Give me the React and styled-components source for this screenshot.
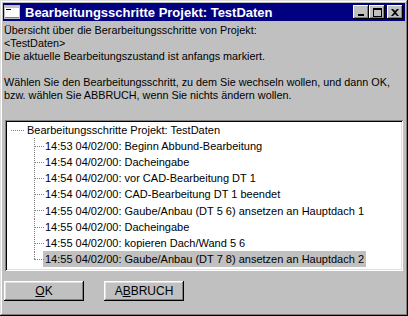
import React from "react";
import styled, { createGlobalStyle } from "styled-components";

const GlobalStyle = createGlobalStyle`
  html, body {
    margin: 0;
    padding: 0;
    background: #c0c0c0;
  }
  body {
    font-family: "Liberation Sans", Arial, sans-serif;
  }
`;

const Window = styled.div`
  width: 408px;
  height: 316px;
  box-sizing: border-box;
  background: #c0c0c0;
  padding: 3px;
  display: flex;
  flex-direction: column;
  box-shadow: inset -1px -1px #000, inset 1px 1px #dfdfdf,
    inset -2px -2px #808080, inset 2px 2px #fff;
`;

const TitleBar = styled.div`
  height: 18px;
  background: #000080;
  display: flex;
  align-items: center;
  padding: 0 2px 0 1px;
  flex-shrink: 0;
`;

const Title = styled.span`
  flex: 1;
  color: #fff;
  font-weight: bold;
  font-size: 13px;
  margin-left: 5px;
  white-space: nowrap;
`;

const Controls = styled.div`
  display: flex;
  align-items: center;
`;

const CtrlButton = styled.div`
  width: 16px;
  height: 14px;
  box-sizing: border-box;
  background: #c0c0c0;
  margin-left: ${(p) => (p.$gap ? "2px" : "0")};
  display: flex;
  align-items: center;
  justify-content: center;
  box-shadow: inset -1px -1px #000, inset 1px 1px #fff,
    inset -2px -2px #808080;
`;

const Content = styled.div`
  flex: 1;
  display: flex;
  flex-direction: column;
  padding: 3px 1px 0 1px;
`;

const Text = styled.p`
  margin: 0 0 ${(p) => (p.$gapAfter ? "13px" : "0")};
  font-size: 10.8px;
  line-height: 13px;
  color: #000;
  white-space: nowrap;
`;

const TreeBox = styled.div`
  margin: 18px 0 0 1px;
  width: 398px;
  height: 151px;
  box-sizing: border-box;
  background: #fff;
  padding: 2px 0 0 0;
  box-shadow: inset 1px 1px #808080, inset -1px -1px #fff,
    inset 2px 2px #000, inset -2px -2px #dfdfdf;
`;

const Row = styled.div`
  position: relative;
  height: 16.1px;
  display: flex;
  align-items: center;
  padding-left: ${(p) => (p.$child ? "38px" : "20px")};
  font-size: 11px;
  color: #000;
  white-space: nowrap;

  &::before {
    content: "";
    position: absolute;
    left: ${(p) => (p.$child ? "29px" : "6px")};
    top: 8px;
    width: ${(p) => (p.$child ? "10px" : "13px")};
    border-top: 1px dotted #808080;
  }

  &::after {
    content: "";
    display: ${(p) => (p.$child ? "block" : "none")};
    position: absolute;
    left: 29px;
    top: 0;
    height: ${(p) => (p.$last ? "8px" : "17px")};
    border-left: 1px dotted #808080;
  }
`;

const Label = styled.span`
  padding: 0 2px;
  line-height: 16px;
  background: ${(p) => (p.$selected ? "#c0c0c0" : "transparent")};
`;

const ButtonRow = styled.div`
  display: flex;
  gap: 20px;
  margin-top: 10px;
`;

const Button = styled.button`
  width: 80px;
  height: 20px;
  box-sizing: border-box;
  padding: 0;
  border: none;
  background: #c0c0c0;
  font-family: "Liberation Sans", Arial, sans-serif;
  font-size: 12px;
  color: #000;
  box-shadow: inset -1px -1px #000, inset 1px 1px #fff,
    inset -2px -2px #808080, inset 2px 2px #dfdfdf;

  u {
    text-decoration: underline;
    text-underline-offset: 1px;
  }
`;

const steps = [
  "14:53 04/02/00: Beginn Abbund-Bearbeitung",
  "14:54 04/02/00: Dacheingabe",
  "14:54 04/02/00: vor CAD-Bearbeitung DT 1",
  "14:54 04/02/00: CAD-Bearbeitung DT 1 beendet",
  "14:55 04/02/00: Gaube/Anbau (DT 5 6) ansetzen an Hauptdach 1",
  "14:55 04/02/00: Dacheingabe",
  "14:55 04/02/00: kopieren Dach/Wand 5 6",
  "14:55 04/02/00: Gaube/Anbau (DT 7 8) ansetzen an Hauptdach 2",
];

const AppIcon = () => (
  <svg width="16" height="14" viewBox="0 0 16 14">
    <rect x="0.5" y="0.5" width="15" height="13" fill="#fff" stroke="#c0c0c0" />
    <rect x="1" y="1" width="14" height="2" fill="#c0c0c0" />
    <rect x="2" y="4" width="5" height="1" fill="#000" />
    <rect x="1" y="12" width="14" height="1" fill="#808080" />
  </svg>
);

export default function App() {
  return (
    <>
      <GlobalStyle />
      <Window>
        <TitleBar>
          <AppIcon />
          <Title>Bearbeitungsschritte Projekt: TestDaten</Title>
          <Controls>
            <CtrlButton>
              <svg width="8" height="8" viewBox="0 0 8 8">
                <rect x="1" y="6" width="6" height="2" fill="#000" />
              </svg>
            </CtrlButton>
            <CtrlButton>
              <svg width="9" height="9" viewBox="0 0 9 9">
                <rect x="0.5" y="0.5" width="8" height="8" fill="none" stroke="#000" />
                <rect x="0" y="0" width="9" height="2" fill="#000" />
              </svg>
            </CtrlButton>
            <CtrlButton $gap>
              <svg width="8" height="7" viewBox="0 0 8 7">
                <path d="M0 0h2l2 2 2-2h2L5 3.5 8 7H6L4 5 2 7H0l3-3.5z" fill="#000" />
              </svg>
            </CtrlButton>
          </Controls>
        </TitleBar>
        <Content>
          <Text>Übersicht über die Berarbeitungsschritte von Projekt:</Text>
          <Text>&lt;TestDaten&gt;</Text>
          <Text $gapAfter>Die aktuelle Bearbeitungszustand ist anfangs markiert.</Text>
          <Text>
            Wählen Sie den Bearbeitungsschritt, zu dem Sie wechseln wollen, und dann OK,
          </Text>
          <Text>bzw. wählen Sie ABBRUCH, wenn Sie nichts ändern wollen.</Text>
          <TreeBox>
            <Row>
              <Label>Bearbeitungsschritte Projekt: TestDaten</Label>
            </Row>
            {steps.map((s, i) => (
              <Row key={i} $child $last={i === steps.length - 1}>
                <Label $selected={i === steps.length - 1}>{s}</Label>
              </Row>
            ))}
          </TreeBox>
          <ButtonRow>
            <Button>
              <u>O</u>K
            </Button>
            <Button>
              A<u>B</u>BRUCH
            </Button>
          </ButtonRow>
        </Content>
      </Window>
    </>
  );
}
